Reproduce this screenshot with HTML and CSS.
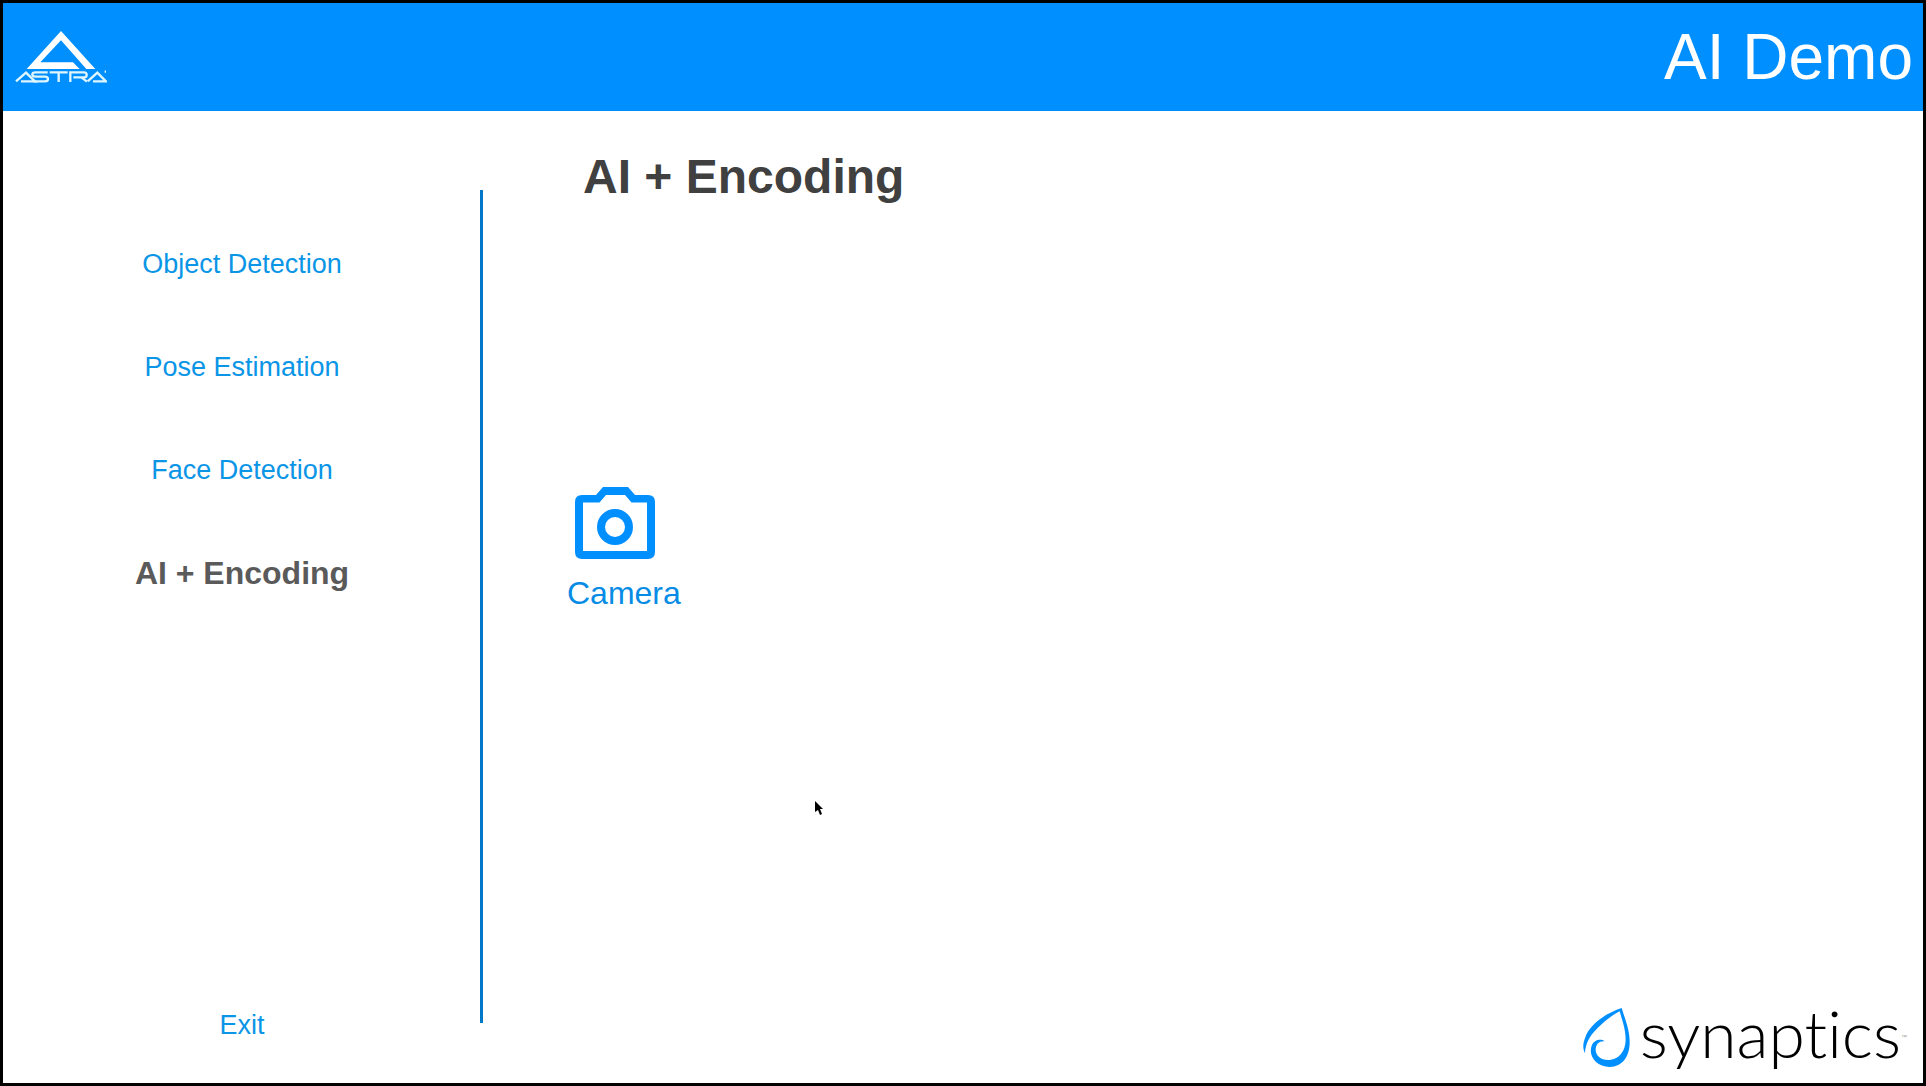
FILE: index.html
```html
<!DOCTYPE html>
<html lang="en">
<head>
<meta charset="utf-8">
<title>AI Demo</title>
<link rel="stylesheet" href="styles.css">
</head>
<body>
<header class="topbar">
  <svg class="astra" viewBox="0 0 276 156" role="img" aria-label="Astra">
    <path class="astra-mark" d="M138 0 L35 114 H194 L174 94 H76 L138 28 L214 114 H241 Z"/>
    <g class="astra-word">
      <path d="M3 151 L33 125 L60 151 H18"/>
      <path d="M98 124 H62 Q52 124 52 130 Q52 137 62 137 H90 Q99 137 99 144 Q99 151 90 151 H55"/>
      <path d="M104 124 H158 M131 124 V153"/>
      <path d="M166 153 V124 H207 Q215 124 215 131 Q215 139 207 139 H175 M199 139 L216 152"/>
      <path d="M218 151 L247 125 L273 151 H234"/>
      <path d="M269 122 H273"/>
    </g>
  </svg>
  <h1 class="app-title">AI Demo</h1>
</header>
<div class="layout">
  <nav class="sidebar" aria-label="Demos">
    <a class="nav-item" href="#object">Object Detection</a>
    <a class="nav-item" href="#pose">Pose Estimation</a>
    <a class="nav-item" href="#face">Face Detection</a>
    <a class="nav-item nav-current" href="#encoding" aria-current="page">AI + Encoding</a>
    <button class="exit" type="button">Exit</button>
  </nav>
  <div class="divider"></div>
  <main class="content">
    <h2 class="page-title">AI + Encoding</h2>
    <button class="source" type="button">
      <svg class="camera" viewBox="0 0 80 72" aria-hidden="true">
        <path fill-rule="evenodd" d="M7 8 H21 L28 0 H53 L60 8 H73 Q80 8 80 15 V65 Q80 72 73 72 H7 Q0 72 0 65 V15 Q0 8 7 8 Z M8 15.500 V64 H72 V15.500 H56.500 L50 8 H31 L24.500 15.500 Z"/>
        <circle cx="40" cy="40" r="14"/>
      </svg>
      <span>Camera</span>
    </button>
    <div class="brand">
      <svg class="drop" viewBox="0 0 141 177" aria-hidden="true">
        <path d="M116 0 C72 14 20 48 7 88 C-1 108 -1 121 6 136 C7 112 16 91 32 73 C55 46 83 24 110 10 C117 36 128 62 128 96 C127 130 109 153 80 156 C54 158 37 143 38 124 C39 107 50 98 65 100 C53 91 33 96 26 113 C15 143 40 177 80 177 C119 177 139 145 140 106 C141 66 126 34 116 0 Z"/>
      </svg>
      <span class="brand-name">synaptics</span><span class="brand-tm">™</span>
    </div>
  </main>
</div>
<svg class="pointer" viewBox="0 0 8 14" aria-hidden="true">
  <path d="M0 0 L8 8 H5 L7 13 L5 14 L3 9 L0 11 Z"/>
</svg>
</body>
</html>
```
FILE: styles.css
```css
* {
  box-sizing: border-box;
}

body {
  position: relative;
  display: flex;
  flex-direction: column;
  min-height: 100vh;
  margin: 0;
  border: 3px solid #000;
  background: #fff;
  color: #008fff;
  font-family: "Liberation Sans", Arial, sans-serif;
}

.topbar {
  display: flex;
  align-items: center;
  justify-content: space-between;
  height: 108px;
  padding: 0 10px 0 12px;
  background: #008fff;
  color: #fff;
}

.astra {
  width: 92px;
  height: 52px;
}

.astra-mark {
  fill: #fff;
}

.astra-word {
  fill: none;
  stroke: #e0f6ff;
  stroke-width: 7;
}

.app-title {
  margin: 0;
  font-size: 64px;
  font-weight: 400;
  line-height: 72px;
}

.layout {
  display: flex;
  flex: 1;
}

.sidebar {
  display: flex;
  flex-direction: column;
  align-items: center;
  width: 25%;
  padding: 102px 2px 42px 0;
}

.nav-item {
  color: #0a95e6;
  font-size: 27px;
  line-height: 103px;
  text-decoration: none;
}

.nav-current {
  color: #5a5a5a;
  font-size: 32px;
  font-weight: 700;
}

.exit,
.source {
  padding: 0;
  border: 0;
  background: none;
  font-family: inherit;
  cursor: pointer;
}

.exit {
  margin-top: auto;
  color: #0a95e6;
  font-size: 27px;
  line-height: 32px;
}

.divider {
  width: 3px;
  margin: 79px 0 60px -3px;
  background: #0078c8;
}

.content {
  display: flex;
  flex: 1;
  flex-direction: column;
  align-items: flex-start;
  padding: 38px 16px 10px 84px;
}

.page-title {
  margin: 0 0 26vh 16px;
  color: #404040;
  font-size: 48px;
  line-height: 56px;
}

.source {
  display: flex;
  flex-direction: column;
  gap: 14px;
  color: #078ce6;
  font-size: 32px;
  line-height: 40px;
}

.camera {
  width: 80px;
  height: 72px;
  margin-left: 8px;
  fill: #008fff;
}

.camera circle {
  fill: none;
  stroke: #008fff;
  stroke-width: 8;
}

.brand {
  display: flex;
  align-items: center;
  margin-top: auto;
  margin-left: auto;
  color: #000;
}

.drop {
  width: 47px;
  height: 59px;
  margin-right: 10px;
  fill: #008fff;
}

.brand-name {
  padding-bottom: 8px;
  font-family: Lato, "Open Sans", sans-serif;
  font-size: 66px;
  font-variant-ligatures: none;
  font-weight: 300;
  line-height: 64px;
}

.brand-tm {
  color: #999;
  font-size: 6px;
}

.pointer {
  position: absolute;
  top: 798px;
  left: 812px;
  width: 8px;
  height: 14px;
}
```
